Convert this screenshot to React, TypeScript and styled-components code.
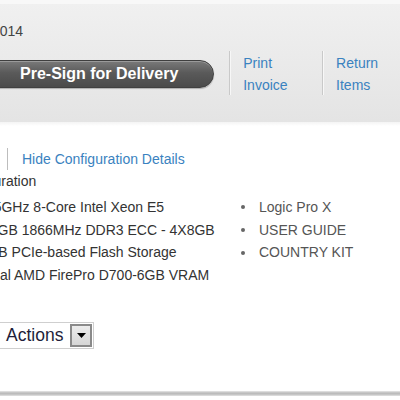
import styled, { createGlobalStyle } from "styled-components";

const GlobalStyle = createGlobalStyle`
  html, body {
    margin: 0;
    padding: 0;
    background: #ffffff;
    font-family: "Liberation Sans", Arial, sans-serif;
  }
`;

const LEFT_SPECS = [
  "3.5GHz 8-Core Intel Xeon E5",
  "32GB 1866MHz DDR3 ECC - 4X8GB",
  "1TB PCIe-based Flash Storage",
  "Dual AMD FirePro D700-6GB VRAM",
];

const RIGHT_SPECS = ["Logic Pro X", "USER GUIDE", "COUNTRY KIT"];

const App = () => {
  return (
    <StPage>
      <GlobalStyle />
      <StTopStrip />
      <StHeader>
        <StDate>
          <span>Ordered: March 4, 2014</span>
        </StDate>
        <StActionRow>
          <StPillButton>Pre-Sign for Delivery</StPillButton>
          <StDivider />
          <StLinkGroup>
            <StLink>Print</StLink>
            <StLink>Invoice</StLink>
          </StLinkGroup>
          <StDivider />
          <StLinkGroup>
            <StLink>Return</StLink>
            <StLink>Items</StLink>
          </StLinkGroup>
        </StActionRow>
      </StHeader>
      <StShade />
      <StContent>
        <StToggleRow>
          <StToggleDivider />
          <StLink>Hide Configuration Details</StLink>
        </StToggleRow>
        <StConfigTitle>Configuration</StConfigTitle>
        <StSpecColumns>
          <StLeftSpecs>
            {LEFT_SPECS.map((spec) => (
              <StSpecLine key={spec}>{spec}</StSpecLine>
            ))}
          </StLeftSpecs>
          <StRightSpecs>
            {RIGHT_SPECS.map((spec) => (
              <StBulletItem key={spec}>{spec}</StBulletItem>
            ))}
          </StRightSpecs>
        </StSpecColumns>
        <StSelect>
          <StSelectText>Actions</StSelectText>
          <StSelectArrow>
            <svg width="9" height="5" viewBox="0 0 9 5">
              <polygon points="0,0 9,0 4.5,5" fill="#000" />
            </svg>
          </StSelectArrow>
        </StSelect>
      </StContent>
      <StBottomRule />
    </StPage>
  );
};

export default App;

const StPage = styled.div`
  width: 400px;
  height: 400px;
  overflow: hidden;
  background: #ffffff;
`;
const StTopStrip = styled.div`
  height: 4px;
  background: #f8f8f8;
`;
const StHeader = styled.div`
  height: 118px;
  box-sizing: border-box;
  padding-top: 18px;
  background: linear-gradient(#f0f0f0, #e4e4e4);
`;
const StDate = styled.div`
  display: flex;
  justify-content: flex-end;
  width: 23px;
  white-space: nowrap;
  font-size: 14px;
  line-height: 18px;
  color: #444;
`;
const StActionRow = styled.div`
  display: flex;
  align-items: center;
  height: 46px;
  margin-top: 10px;
`;
const StPillButton = styled.div`
  display: flex;
  align-items: center;
  height: 28px;
  box-sizing: border-box;
  margin: 1px 0 0 -40px;
  padding: 0 35px 0 59px;
  border: 1px solid #3f3f3f;
  border-radius: 14px;
  background: linear-gradient(#7a7a7a, #5a5a5a 45%, #4a4a4a);
  box-shadow: inset 0 1px 0 rgba(255, 255, 255, 0.25),
    0 1px 1px rgba(0, 0, 0, 0.25);
  color: #ffffff;
  font-size: 16px;
  font-weight: bold;
  white-space: nowrap;
`;
const StDivider = styled.div`
  align-self: stretch;
  width: 1px;
  margin: 1px 0 1px 15px;
  background: #c9c9c9;
  box-shadow: 1px 0 0 #f7f7f7;
`;
const StLinkGroup = styled.div`
  display: flex;
  flex-direction: column;
  width: 80px;
  padding: 1px 0 0 13px;
  box-sizing: border-box;
`;
const StLink = styled.a`
  color: #3a82c0;
  font-size: 14px;
  line-height: 22px;
  text-decoration: none;
  cursor: pointer;
`;
const StShade = styled.div`
  height: 4px;
  background: linear-gradient(#f4f4f4, #ffffff);
`;
const StContent = styled.div`
  padding-top: 22px;
  height: 262px;
  box-sizing: border-box;
`;
const StToggleRow = styled.div`
  display: flex;
  align-items: center;
  height: 22px;
`;
const StToggleDivider = styled.div`
  align-self: stretch;
  width: 1px;
  margin: 0 14px 0 7px;
  background: #bdbdbd;
`;
const StConfigTitle = styled.div`
  margin-left: -47px;
  font-size: 14px;
  line-height: 23px;
  color: #333;
  white-space: nowrap;
`;
const StSpecColumns = styled.div`
  display: flex;
  margin-top: 3px;
`;
const StLeftSpecs = styled.div`
  display: flex;
  flex-direction: column;
  width: 259px;
  margin-left: -18px;
  flex-shrink: 0;
`;
const StSpecLine = styled.div`
  font-size: 14px;
  line-height: 22.7px;
  color: #333;
  white-space: nowrap;
`;
const StRightSpecs = styled.ul`
  margin: 0;
  padding: 0;
  list-style: none;
`;
const StBulletItem = styled.li`
  display: flex;
  align-items: center;
  font-size: 14px;
  line-height: 22.7px;
  color: #555;
  white-space: nowrap;

  &::before {
    content: "";
    width: 4px;
    height: 4px;
    margin-right: 14px;
    border-radius: 50%;
    background: #666;
  }
`;
const StSelect = styled.div`
  display: flex;
  align-items: center;
  width: 134px;
  height: 27px;
  margin: 35px 0 0 -40px;
  box-sizing: border-box;
  border: 1px solid #cfcfcf;
  padding: 0 1px 0 45px;
  background: #ffffff;
`;
const StSelectText = styled.span`
  flex: 1;
  font-size: 17.5px;
  color: #1e1e3a;
`;
const StSelectArrow = styled.div`
  display: flex;
  align-items: center;
  justify-content: center;
  width: 22px;
  height: 23px;
  box-sizing: border-box;
  border: 2px solid #8a8a8a;
  background: linear-gradient(#ececec, #d6d6d6);
`;
const StBottomRule = styled.div`
  height: 5px;
  margin-top: 3px;
  background: linear-gradient(#e8e8e8, #bcbcbc 40%, #bcbcbc 60%, #e4e4e4);
`;
